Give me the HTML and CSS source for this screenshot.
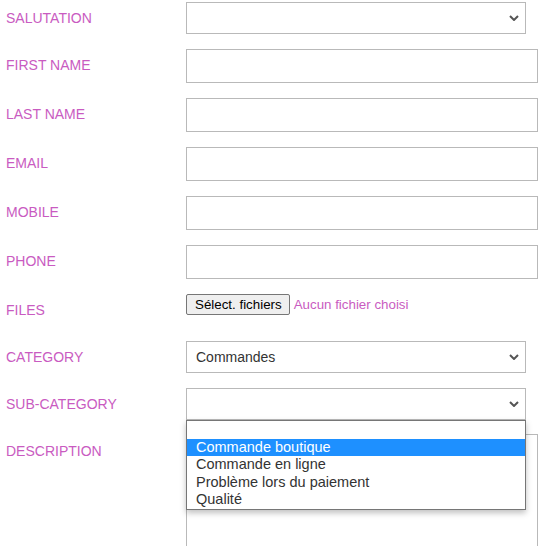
FILE: index.html
```html
<!DOCTYPE html>
<html lang="fr">
<head>
<meta charset="utf-8">
<title>Form</title>
<link rel="stylesheet" href="styles.css">
</head>
<body>
<form class="form">
  <div class="row">
    <label class="lbl">SALUTATION</label>
    <div class="select"><span class="val"></span><svg class="chev" viewBox="0 0 10 6" width="10" height="6"><path d="M1 1 L5 5 L9 1" fill="none" stroke="#555" stroke-width="2"/></svg></div>
  </div>
  <div class="row"><label class="lbl lbl-in">FIRST NAME</label><div class="input"></div></div>
  <div class="row"><label class="lbl lbl-in">LAST NAME</label><div class="input"></div></div>
  <div class="row"><label class="lbl lbl-in">EMAIL</label><div class="input"></div></div>
  <div class="row"><label class="lbl lbl-in">MOBILE</label><div class="input"></div></div>
  <div class="row"><label class="lbl lbl-in">PHONE</label><div class="input"></div></div>
  <div class="row row-files">
    <label class="lbl lbl-top">FILES</label>
    <div class="files"><span class="filebtn">Sélect. fichiers</span><span class="nofile">Aucun fichier choisi</span></div>
  </div>
  <div class="row">
    <label class="lbl">CATEGORY</label>
    <div class="select"><span class="val">Commandes</span><svg class="chev" viewBox="0 0 10 6" width="10" height="6"><path d="M1 1 L5 5 L9 1" fill="none" stroke="#555" stroke-width="2"/></svg></div>
  </div>
  <div class="row row-sub">
    <label class="lbl">SUB-CATEGORY</label>
    <div class="select-wrap">
      <div class="select"><span class="val"></span><svg class="chev" viewBox="0 0 10 6" width="10" height="6"><path d="M1 1 L5 5 L9 1" fill="none" stroke="#555" stroke-width="2"/></svg></div>
      <ul class="menu">
        <li class="opt"></li>
        <li class="opt active">Commande boutique</li>
        <li class="opt">Commande en ligne</li>
        <li class="opt">Problème lors du paiement</li>
        <li class="opt">Qualité</li>
      </ul>
    </div>
  </div>
  <div class="row row-desc">
    <label class="lbl lbl-top2">DESCRIPTION</label>
    <div class="textarea"></div>
  </div>
</form>
</body>
</html>
```
FILE: styles.css
```css
html, body {
  margin: 0;
  padding: 0;
  background: #fff;
  overflow: hidden;
}
body {
  font-family: "Liberation Sans", Arial, sans-serif;
  font-size: 14px;
}
.form {
  padding: 2px 0 0 6px;
}
.row {
  display: flex;
  align-items: center;
  margin-bottom: 15px;
}
.lbl {
  width: 180px;
  flex: none;
  color: #c95bc1;
  font-size: 14px;
  line-height: 16px;
}
.lbl-in {
  margin-bottom: 2px;
}
.lbl-top {
  align-self: flex-start;
  line-height: 32px;
}
.lbl-top2 {
  align-self: flex-start;
  line-height: 34px;
}
.select {
  box-sizing: border-box;
  width: 340px;
  height: 32px;
  border: 1px solid #b9b9b9;
  background: #fff;
  display: flex;
  align-items: center;
  justify-content: space-between;
  padding: 0 6px 0 9px;
  color: #333;
  font-size: 14px;
}
.chev {
  display: block;
}
.input {
  box-sizing: border-box;
  width: 352px;
  height: 34px;
  border: 1px solid #b9b9b9;
  background: #fff;
}
.row-files {
  align-items: flex-start;
  height: 32px;
}
.files {
  display: flex;
  align-items: center;
  height: 20px;
}
.filebtn {
  box-sizing: border-box;
  height: 21px;
  padding: 0 7px 0 8px;
  border: 1px solid #767676;
  border-radius: 2px;
  background: #efefef;
  color: #000;
  font-size: 13.33px;
  line-height: 19px;
}
.nofile {
  margin-left: 4px;
  color: #c95bc1;
  font-size: 13.33px;
}
.row-sub {
  margin-bottom: 14px;
}
.select-wrap {
  position: relative;
}
.menu {
  position: absolute;
  z-index: 2;
  top: 32px;
  left: 0;
  box-sizing: border-box;
  width: 340px;
  margin: 0;
  padding: 0;
  list-style: none;
  background: #fff;
  border: 1px solid #767676;
  box-shadow: 0 3px 6px rgba(0, 0, 0, 0.25);
}
.opt {
  height: 17.6px;
  line-height: 17.6px;
  padding: 0 9px;
  color: #333;
  font-size: 14.5px;
  white-space: nowrap;
}
.opt.active {
  background: #1e90ff;
  color: #fff;
}
.row-desc {
  align-items: flex-start;
}
.textarea {
  box-sizing: border-box;
  width: 352px;
  height: 160px;
  border: 1px solid #b9b9b9;
  background: #fff;
}
```
